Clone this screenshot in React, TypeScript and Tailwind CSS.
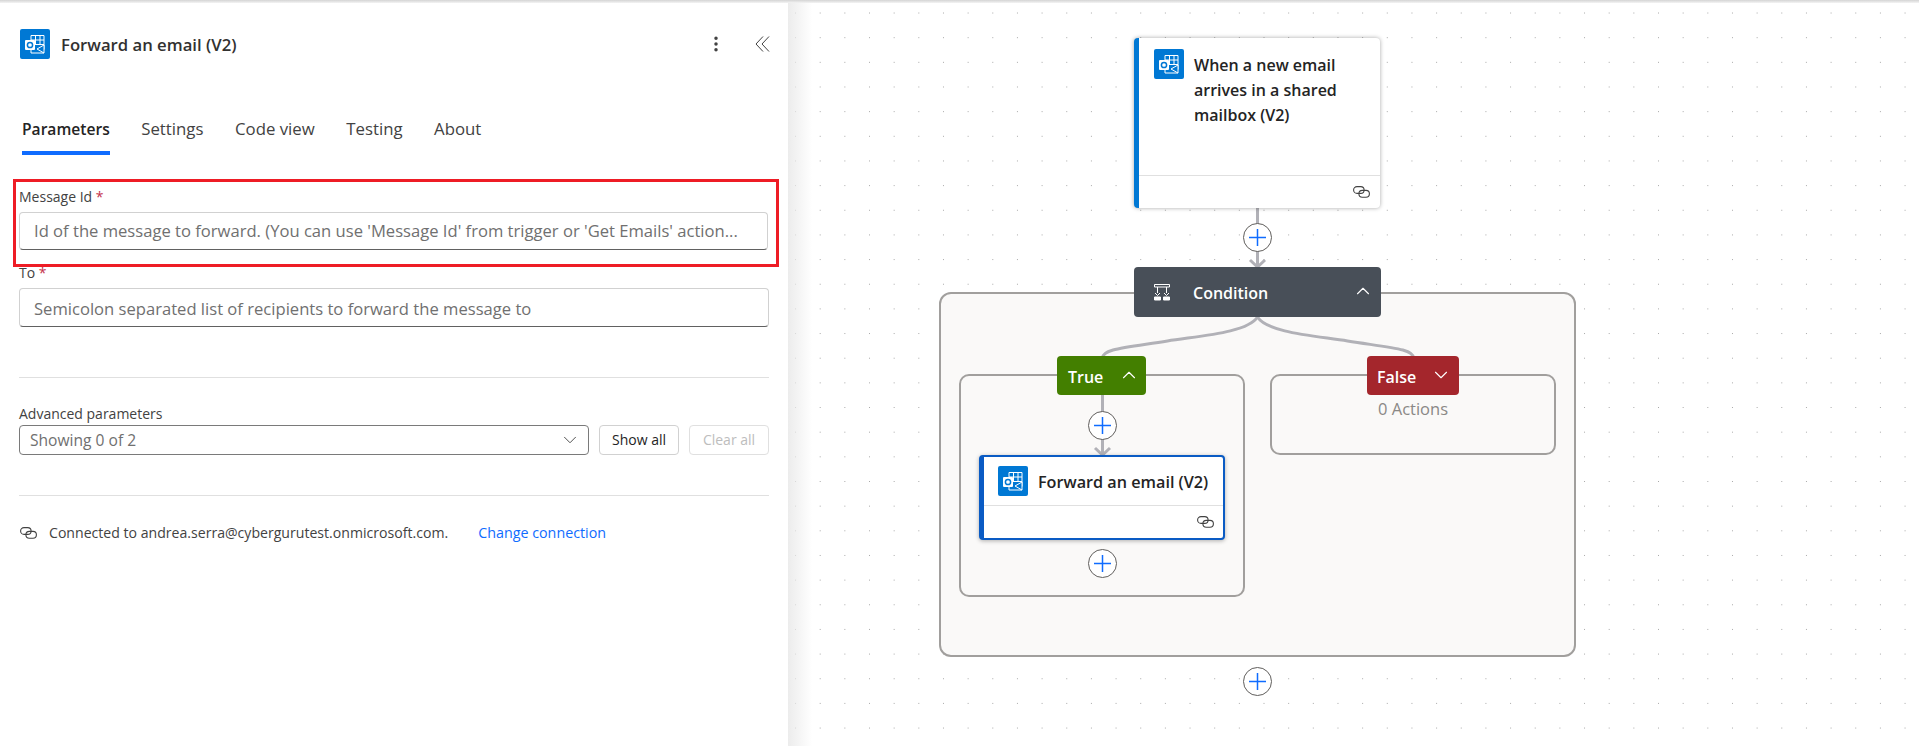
import { ChevronDown, ChevronUp, MoreVertical } from "lucide-react";

const OutlookIcon = () => (
  <svg width="30" height="30" viewBox="0 0 30 30" className="shrink-0">
    <rect width="30" height="30" rx="2" fill="#0078d4" />
    <path d="M11 6.500h13v14H11z" fill="none" stroke="#fff" strokeWidth="1" />
    <path d="M11 11h13M11 15.500h13M15.500 6.500v9M20 6.500v9" stroke="#fff" strokeWidth="1" />
    <path d="M11 17v7h13v-8l-7 4" fill="#0078d4" stroke="#fff" strokeWidth="1" />
    <path d="M17 20l7 4" stroke="#fff" strokeWidth="1" />
    <rect x="5" y="11" width="10" height="10" rx="1" fill="#fff" />
    <circle cx="10" cy="16" r="2.600" fill="none" stroke="#0078d4" strokeWidth="1.500" />
  </svg>
);

const LinkIcon = ({ className }: { className?: string }) => (
  <svg width="17" height="12" viewBox="0 0 17 12" fill="none" stroke="#424242" strokeWidth="1.100" className={className}>
    <rect x="0.600" y="0.600" width="10.500" height="6.800" rx="3.400" />
    <rect x="5.900" y="4.400" width="10.500" height="6.800" rx="3.400" />
  </svg>
);

const ConditionIcon = () => (
  <svg width="16" height="17" viewBox="0 0 16 17" fill="none" stroke="#fff" strokeWidth="1">
    <path d="M0.500 0.500h15v2.500h-15zM3.500 3v6M12.500 3v6" />
    <path d="M1 9l2.500 2.500L6 9M10 9l2.500 2.500L15 9" />
    <path d="M0.500 13h6v3h-6zM9.500 13h6v3h-6z" fill="#fff" />
  </svg>
);

const CollapseIcon = () => (
  <svg width="15" height="16" viewBox="0 0 15 16" fill="none" stroke="#424242" strokeWidth="1" className="-mr-[2px] ml-[29px]">
    <path d="M8 0.500L1 8l7 7.500M14 0.500L7 8l7 7.500" />
  </svg>
);

const AddButton = ({ className }: { className: string }) => (
  <button className={`absolute flex h-[29px] w-[29px] items-center justify-center rounded-full border border-[#605e5c] bg-white ${className}`}>
    <svg width="17" height="17" viewBox="0 0 17 17" stroke="#0f6cff" strokeWidth="1.500">
      <path d="M0 8.500h17M8.500 0v17" />
    </svg>
  </button>
);

const Field = ({ label, placeholder, tall }: { label: string; placeholder: string; tall?: boolean }) => (
  <div>
    <label className="block text-sm leading-5 text-[#424242]">
      {label} <span className="text-[#c4314b]">*</span>
    </label>
    <div className={`mt-[5px] flex items-center rounded border border-[#d1d1d1] border-b-[#616161] pl-[14px] text-[16.6px] text-[#707070] ${tall ? "h-[39px] pt-[4px]" : "h-[38px]"}`}>
      <span className="truncate">{placeholder}</span>
    </div>
  </div>
);

const tabs = ["Settings", "Code view", "Testing", "About"];

const Panel = () => (
  <aside className="relative z-10 h-full w-[788px] shrink-0 bg-white">
    <div className="mt-[29px] flex h-[30px] items-center px-5">
      <OutlookIcon />
      <h1 className="ml-[11px] flex-1 pt-[1px] text-[16.7px] font-semibold text-[#323130]">Forward an email (V2)</h1>
      <MoreVertical size={20} strokeWidth={2.200} className="text-[#424242]" />
      <CollapseIcon />
    </div>

    <div className="mt-[51px] flex h-[45px] items-start gap-[31.5px] pl-[22px] text-[16.8px] leading-[38px] text-[#424242]">
      <div className="h-[45px] border-b-4 border-[#0f6cff] text-[15.6px] font-semibold text-[#242424]">Parameters</div>
      {tabs.map((tab) => (
        <div key={tab}>{tab}</div>
      ))}
    </div>

    <div className="ml-[13px] mr-[9px] mt-6 border-[3px] border-[#ee1c25] pb-[14px] pl-[3px] pr-[8px] pt-[5px]">
      <Field label="Message Id" placeholder="Id of the message to forward. (You can use 'Message Id' from trigger or 'Get Emails' action..." />
    </div>

    <div className="mx-[19px] -mt-1">
      <Field tall label="To" placeholder="Semicolon separated list of recipients to forward the message to" />
      <hr className="mt-[50px] border-[#e0e0e0]" />
      <div className="mt-[26px] text-sm leading-5 text-[#424242]">Advanced parameters</div>
      <div className="mt-[1px] flex h-[30px] gap-[10px] text-sm">
        <div className="flex flex-1 items-center justify-between rounded-sm border border-[#7a7a7a] pl-[10px] pr-[7px] text-[15.6px] text-[#707070]">
          Showing 0 of 2
          <ChevronDown size={22} strokeWidth={1} className="text-[#424242]" />
        </div>
        <button className="w-20 rounded border border-[#d1d1d1] text-[#242424]">Show all</button>
        <button className="w-20 rounded border border-[#e0e0e0] text-[#bdbdbd]">Clear all</button>
      </div>
      <hr className="mt-[40px] border-[#e0e0e0]" />
      <div className="mt-[27px] flex h-5 items-center text-[14.1px] text-[#424242]">
        <LinkIcon className="ml-[1px]" />
        <span className="ml-3">Connected to andrea.serra@cybergurutest.onmicrosoft.com.</span>
        <a className="ml-[30px] text-[14.3px] text-[#0f6cff]">Change connection</a>
      </div>
    </div>
  </aside>
);

// coordinates below are relative to the canvas, which starts at x=788
const Canvas = () => (
  <main className="relative h-full flex-1 overflow-hidden bg-white bg-[radial-gradient(circle,#a8a8a8_0.6px,transparent_0.9px)] bg-[size:24.67px_24.67px] bg-[position:-4.8px_0.7px]">
    <div className="absolute inset-y-0 left-0 w-6 bg-gradient-to-r from-[#ececec] to-transparent" />

    <div className="absolute left-[151px] top-[292px] h-[365px] w-[637px] rounded-xl border-[2.5px] border-[#a19f9d] bg-[#faf9f8]" />
    <div className="absolute left-[171px] top-[374px] h-[223px] w-[286px] rounded-[10px] border-[2.5px] border-[#a19f9d]" />
    <div className="absolute left-[482px] top-[374px] h-[81px] w-[286px] rounded-[10px] border-[2.5px] border-[#a19f9d]" />

    <svg className="absolute left-0 top-0" width="1131" height="746" fill="none" stroke="#b1b1b7" strokeWidth="3">
      <path d="M469.500 208v59M462 260l7.500 7 7.500-7" />
      <path d="M469.500 317c-10 16-60 19-90 24-45 7-65 8-65 17" />
      <path d="M469.500 317c10 16 60 19 90 24 45 7 66 8 66 17" />
      <path d="M314.500 395v60M307 448l7.500 7 7.500-7" />
    </svg>

    <section className="absolute left-[346px] top-[38px] flex h-[170px] w-[246px] flex-col rounded-sm border-l-[5px] border-[#0078d4] bg-white shadow-[0_0_4px_rgba(0,0,0,0.35)]">
      <div className="flex flex-1 items-start pl-[15px] pt-[11px]">
        <OutlookIcon />
        <p className="ml-[10px] w-[160px] pt-[4px] text-base font-semibold leading-[25px] text-[#242424]">
          When a new email arrives in a shared mailbox (V2)
        </p>
      </div>
      <div className="flex h-[33px] items-center justify-end border-t border-[#e0e0e0] pr-[10px]">
        <LinkIcon />
      </div>
    </section>

    <AddButton className="left-[455px] top-[223px]" />

    <section className="absolute left-[346px] top-[267px] flex h-[50px] w-[247px] items-center rounded bg-[#484f58] pl-5 pr-[7px] text-white">
      <ConditionIcon />
      <span className="ml-[23px] flex-1 pt-[2px] text-base font-semibold">Condition</span>
      <ChevronUp size={22} strokeWidth={1.200} className="-mt-[2px]" />
    </section>

    <div className="absolute left-[269px] top-[356px] flex h-[39px] w-[89px] items-center rounded-sm bg-[#437f00] pl-[11px] pr-[6px] text-base font-semibold text-white">
      <span className="flex-1 pt-[3px]">True</span>
      <ChevronUp size={22} strokeWidth={1.200} className="-mt-[2px]" />
    </div>
    <div className="absolute left-[579px] top-[356px] flex h-[39px] w-[92px] items-center rounded-sm bg-[#a4262c] pl-[10px] pr-[7px] text-base font-semibold text-white">
      <span className="flex-1 pt-[3px]">False</span>
      <ChevronDown size={22} strokeWidth={1.200} className="-mt-[2px]" />
    </div>
    <div className="absolute left-[482px] top-[397px] w-[286px] text-center text-[16.5px] leading-6 text-[#8a8886]">0 Actions</div>

    <AddButton className="left-[300px] top-[411px]" />

    <section className="absolute left-[191px] top-[455px] flex h-[85px] w-[246px] flex-col rounded-sm border-2 border-l-[5px] border-[#0a5bc4] bg-white shadow-[0_1px_4px_rgba(0,0,0,0.3)]">
      <div className="flex h-[49px] items-center border-b border-[#e0e0e0] pl-[14px]">
        <OutlookIcon />
        <p className="ml-[10px] whitespace-nowrap pt-[3px] text-[16.2px] font-semibold text-[#242424]">Forward an email (V2)</p>
      </div>
      <div className="flex flex-1 items-center justify-end pr-[9px]">
        <LinkIcon />
      </div>
    </section>

    <AddButton className="left-[300px] top-[549px]" />
    <AddButton className="left-[455px] top-[667px]" />
  </main>
);

export default function App() {
  return (
    <div className="relative flex h-[746px] w-full overflow-hidden font-['Open_Sans',sans-serif]">
      <Panel />
      <Canvas />
      <div className="absolute inset-x-0 top-0 z-20 h-[3px] bg-gradient-to-b from-[#d4d4d4] to-[#f4f4f4]" />
    </div>
  );
}
